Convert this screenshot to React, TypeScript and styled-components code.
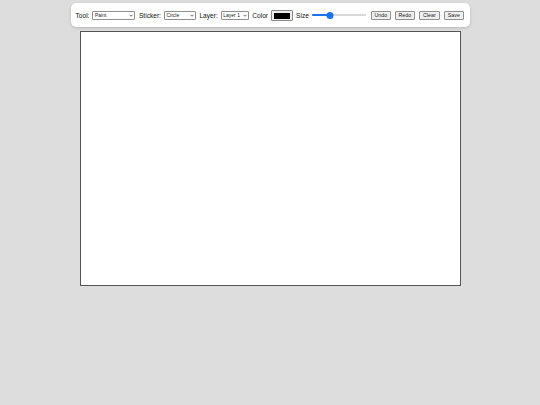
import styled, { createGlobalStyle } from 'styled-components';

const GlobalStyle = createGlobalStyle`
  html, body {
    margin: 0;
    padding: 0;
    background: #dddddd;
    font-family: "Liberation Sans", Arial, sans-serif;
  }
`;

const Page = styled.div`
  display: flex;
  flex-direction: column;
  align-items: center;
  padding-top: 3px;
`;

const Toolbar = styled.div`
  display: flex;
  align-items: center;
  gap: 3px;
  width: 399px;
  height: 24px;
  box-sizing: border-box;
  padding: 1px 5px 0;
  background: #fff;
  border-radius: 5px;
  box-shadow: 0 1px 3px rgba(0, 0, 0, 0.18);
  font-size: 6.6px;
  color: #111;
`;

const Label = styled.span`
  white-space: nowrap;
`;

const SelectBox = styled.div<{ $w: number }>`
  position: relative;
  width: ${p => p.$w}px;
  height: 9px;
  margin-right: 0.5px;

  > svg {
    position: absolute;
    right: 2px;
    top: 3px;
    width: 4px;
    height: 3px;
    pointer-events: none;
  }
`;

const Select = styled.select`
  appearance: none;
  display: block;
  width: 100%;
  height: 100%;
  box-sizing: border-box;
  padding: 0 0 0 1.5px;
  font-family: "Liberation Sans", Arial, sans-serif;
  font-size: 5px;
  line-height: 7px;
  border: 1px solid #8f8f8f;
  border-radius: 1px;
  background: #fff;
  color: #222;
  outline: none;
`;

const Swatch = styled.div`
  width: 22px;
  height: 11px;
  box-sizing: border-box;
  border: 1px solid #8a8a8a;
  border-radius: 1px;
  background: #efefef;
  padding: 1.5px 2px;

  > div {
    width: 100%;
    height: 100%;
    background: #000;
  }
`;

const Range = styled.div`
  position: relative;
  width: 54px;
  height: 8px;
  margin: 0 2px 1px 0;

  &::before {
    content: '';
    position: absolute;
    left: 0;
    right: 0;
    top: 3px;
    height: 2px;
    border-radius: 1px;
    background: #efefef;
    box-shadow: inset 0 0 0 0.5px #c4c4c4;
  }
`;

const RangeFill = styled.div`
  position: absolute;
  left: 0;
  top: 3px;
  height: 2px;
  border-radius: 1px;
  background: #1a73e8;
`;

const Thumb = styled.div`
  position: absolute;
  top: 0.5px;
  width: 7px;
  height: 7px;
  border-radius: 50%;
  background: #1a73e8;
  transform: translateX(-50%);
`;

const Button = styled.button<{ $w: number }>`
  width: ${p => p.$w}px;
  height: 9px;
  padding: 0;
  margin-right: 1px;
  font-family: "Liberation Sans", Arial, sans-serif;
  font-size: 5.3px;
  line-height: 7px;
  color: #222;
  background: #efefef;
  border: 1px solid #8f8f8f;
  border-radius: 1px;

  &:last-child {
    margin-right: 0;
  }
`;

const Canvas = styled.div`
  width: 381px;
  height: 255px;
  box-sizing: border-box;
  margin-top: 4px;
  background: #fff;
  border: 1.5px solid #555;
`;

function Chevron() {
  return (
    <svg viewBox="0 0 8 6">
      <path d="M1 1.5 L4 4.5 L7 1.5" fill="none" stroke="#222" strokeWidth="1.4" />
    </svg>
  );
}

export default function App() {
  const size = 33;
  return (
    <Page>
      <GlobalStyle />
      <Toolbar>
        <Label>Tool:</Label>
        <SelectBox $w={43}>
          <Select defaultValue="paint">
            <option value="paint">Paint</option>
            <option value="sticker">Sticker</option>
            <option value="erase">Erase</option>
          </Select>
          <Chevron />
        </SelectBox>
        <Label>Sticker:</Label>
        <SelectBox $w={32}>
          <Select defaultValue="circle">
            <option value="circle">Circle</option>
            <option value="star">Star</option>
            <option value="heart">Heart</option>
          </Select>
          <Chevron />
        </SelectBox>
        <Label>Layer:</Label>
        <SelectBox $w={28}>
          <Select defaultValue="1">
            <option value="1">Layer 1</option>
            <option value="2">Layer 2</option>
          </Select>
          <Chevron />
        </SelectBox>
        <Label>Color</Label>
        <Swatch><div /></Swatch>
        <Label>Size</Label>
        <Range>
          <RangeFill style={{ width: `${size}%` }} />
          <Thumb style={{ left: `${size}%` }} />
        </Range>
        <Button $w={20}>Undo</Button>
        <Button $w={20}>Redo</Button>
        <Button $w={21}>Clear</Button>
        <Button $w={20}>Save</Button>
      </Toolbar>
      <Canvas />
    </Page>
  );
}
